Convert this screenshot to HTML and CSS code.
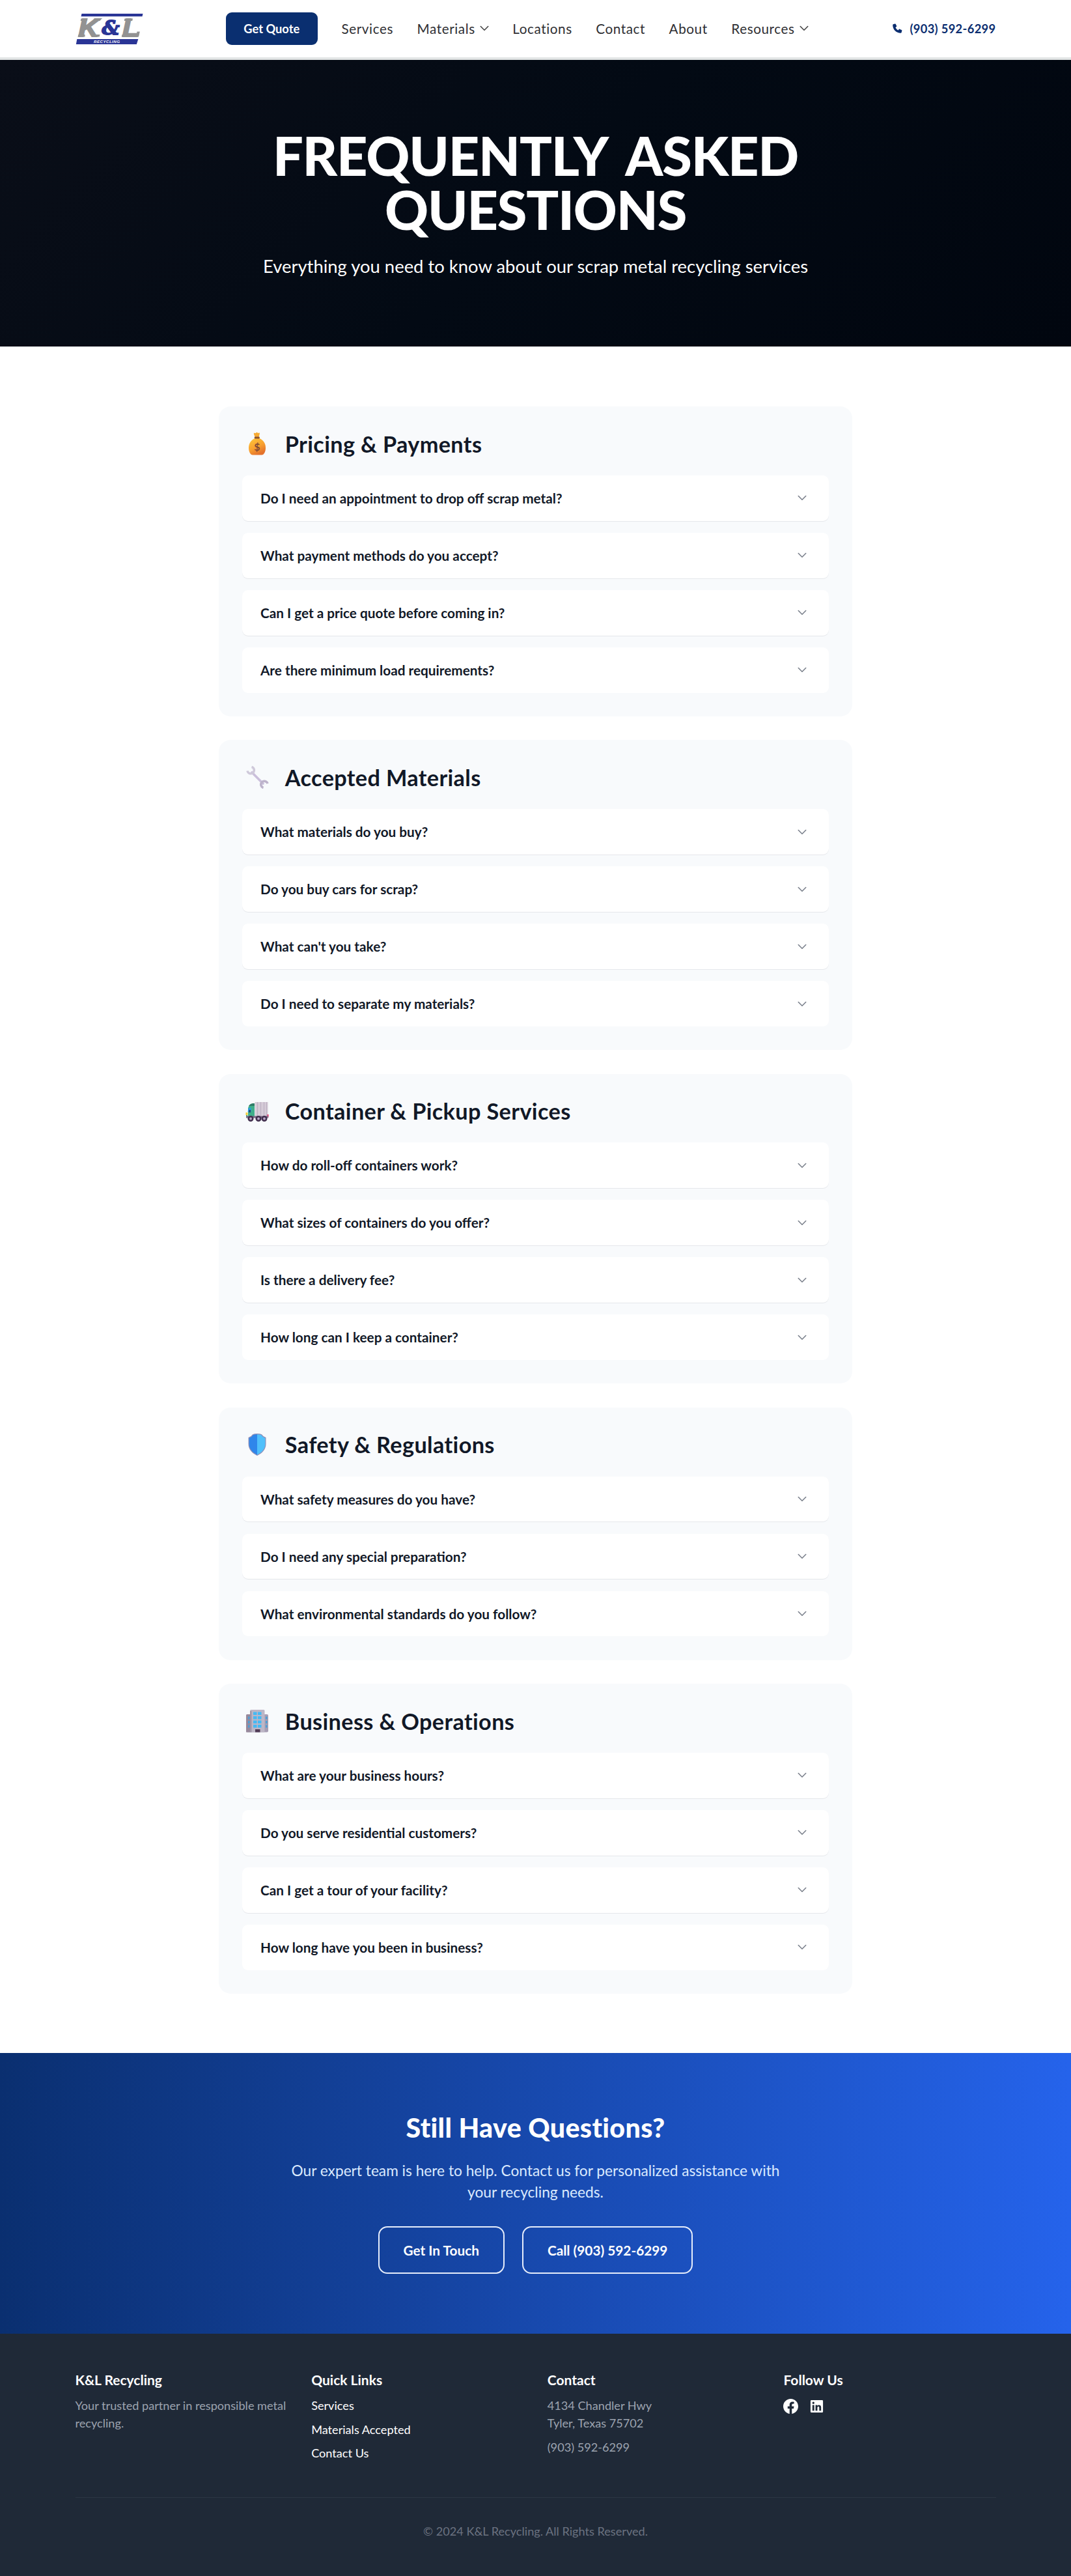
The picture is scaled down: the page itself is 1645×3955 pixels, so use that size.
FILE: index.html
```html
<!DOCTYPE html>
<html lang="en">
<head>
<meta charset="utf-8">
<title>Frequently Asked Questions | K&amp;L Recycling</title>
<link rel="stylesheet" href="styles.css">
</head>
<body>
<svg class="defs" width="0" height="0">
  <symbol id="chev" viewBox="0 0 14 9"><path d="M1.300 1.500 7 7.200l5.700-5.700" fill="none" stroke="currentColor" stroke-width="1.600" stroke-linecap="round" stroke-linejoin="round"/></symbol>
</svg>

<header class="header">
  <div class="container header-row">
    <svg class="logo" viewBox="0 0 104 48" width="104" height="48">
      <path d="M9.500 1h94l-1 4.300h-94z" fill="#2a3596"/>
      <path d="M2.300 40h94l-2.500 8h-93z" fill="#2a3596"/>
      <g font-weight="700" font-style="italic" fill="#929292" stroke="#929292" stroke-width="2" font-family="Liberation Sans">
        <text x="4.500" y="35.500" font-size="38" textLength="31" lengthAdjust="spacingAndGlyphs">K</text>
        <text x="72" y="35.500" font-size="38" textLength="26" lengthAdjust="spacingAndGlyphs">L</text>
      </g>
      <path d="M4.500 33h10v3.500h-11zM25 33h12.500l-.8 3.500H26zM8.500 8.500h10l-.8 3.500h-10zM28 8.500h12l-2.500 3.500h-10zM71.500 33h10v3.500H70.700zM75.500 8.500H88l-.8 3.500H74.700zM94.500 28.500h4.300L97 36.500h-4z" fill="#929292"/>
      <text x="40.500" y="32.500" font-family="DejaVu Serif" font-weight="700" font-style="italic" font-size="29" textLength="27" lengthAdjust="spacingAndGlyphs" fill="#2a3596" stroke="#2a3596" stroke-width="1.800">&amp;</text>
      <text x="28" y="46.200" font-family="Liberation Sans" font-weight="700" font-style="italic" font-size="6.200" textLength="40" fill="#fff">RECYCLING</text>
    </svg>
    <a class="quote">Get Quote</a>
    <nav class="nav">
      <a>Services</a>
      <a>Materials<svg class="nav-chev" width="14" height="9"><use href="#chev"/></svg></a>
      <a>Locations</a>
      <a>Contact</a>
      <a>About</a>
      <a>Resources<svg class="nav-chev" width="14" height="9"><use href="#chev"/></svg></a>
    </nav>
    <a class="phone">
      <svg width="15" height="15" viewBox="0 0 15 15"><path d="M3.600.6.900 1.300C.400 1.500.200 1.900.2 2.400c0 6.800 5.500 12.300 12.300 12.300.5 0 .9-.3 1.100-.8l.8-2.800c.1-.5-.1-1-.6-1.200l-3-1.200c-.4-.2-.8-.1-1.100.3l-1.200 1.500A9.700 9.700 0 0 1 4.400 6.300l1.500-1.200c.3-.3.400-.700.3-1.100L4.900 1.200C4.700.7 4.200.4 3.600.6z" fill="currentColor"/></svg>
      (903) 592-6299
    </a>
  </div>
</header>

<section class="hero">
  <h1>FREQUENTLY ASKED<br>QUESTIONS</h1>
  <p>Everything you need to know about our scrap metal recycling services</p>
</section>

<main class="faq">
  <section class="panel">
    <h2>
      <svg class="emoji" viewBox="0 0 36 36">
        <defs><linearGradient id="bag" x1="0" y1="0" x2=".5" y2="1"><stop offset="0" stop-color="#ffc83a"/><stop offset=".6" stop-color="#f8a130"/><stop offset="1" stop-color="#e4722c"/></linearGradient></defs>
        <path d="M14 1.500q1 1 2.200 0 1.300-1.400 2.500 0 1.200 1 2.300-.2 1.600.2.700 2.200L20.500 8.500h-5.800l-1.800-5q-.6-1.800 1.100-2z" fill="#f6ab34"/>
        <path d="M14.500 10h7C27.500 12.500 31 18 31 24.500c0 6-2.500 11-6 11H11c-3.500 0-6-5-6-11 0-6.500 3.500-12 9.500-14.500z" fill="url(#bag)"/>
        <rect x="13.800" y="7.500" width="8" height="3" rx="1" fill="#8a5231"/>
        <text x="18" y="29" text-anchor="middle" font-family="Lato" font-size="16" font-weight="700" fill="#7f4a35">$</text>
      </svg>
      Pricing &amp; Payments
    </h2>
    <div class="list">
      <div class="item">Do I need an appointment to drop off scrap metal?<svg class="chev"><use href="#chev"/></svg></div>
      <div class="item">What payment methods do you accept?<svg class="chev"><use href="#chev"/></svg></div>
      <div class="item">Can I get a price quote before coming in?<svg class="chev"><use href="#chev"/></svg></div>
      <div class="item">Are there minimum load requirements?<svg class="chev"><use href="#chev"/></svg></div>
    </div>
  </section>

  <section class="panel">
    <h2>
      <svg class="emoji" viewBox="0 0 36 36">
        <path d="M10 11 27 28" stroke="#cabfdb" stroke-width="3.800" stroke-linecap="round"/>
        <path d="M9.500 2.500A5.200 5.200 0 1 1 3 8.500" fill="none" stroke="#cfc9da" stroke-width="3.600"/>
        <path d="M27.500 34.500A5.200 5.200 0 1 1 34 28" fill="none" stroke="#bdb3cb" stroke-width="3.600"/>
      </svg>
      Accepted Materials
    </h2>
    <div class="list">
      <div class="item">What materials do you buy?<svg class="chev"><use href="#chev"/></svg></div>
      <div class="item">Do you buy cars for scrap?<svg class="chev"><use href="#chev"/></svg></div>
      <div class="item">What can't you take?<svg class="chev"><use href="#chev"/></svg></div>
      <div class="item">Do I need to separate my materials?<svg class="chev"><use href="#chev"/></svg></div>
    </div>
  </section>

  <section class="panel">
    <h2>
      <svg class="emoji" viewBox="0 0 36 36">
        <path d="M4 26V13.500Q5 8 9.500 8H14v19H1v-6z" fill="#3fae8a"/>
        <path d="M5 10q2-3.500 6-4h3v4z" fill="#2f7d68"/>
        <path d="M3.500 19l1.300-6h3.700v6z" fill="#2b9be0"/>
        <path d="M5.500 16h2.500v4H5z" fill="#234a78"/>
        <rect x="14.500" y="4" width="20" height="23.500" fill="#d6ccd8"/>
        <path d="M18.500 4v23M23.500 4v23M28.500 4v23M32.500 4v23" stroke="#bdb1c3" stroke-width="1.200"/>
        <path d="M.500 20h3v4h-3z" fill="#f6cf3e"/>
        <path d="M33.500 23h2v4.500h-2z" fill="#e0306a"/>
        <path d="M1 25.500h34v3H1z" fill="#7b6a85"/>
        <g fill="#43304f"><circle cx="8" cy="29.500" r="4.500"/><circle cx="20" cy="29.500" r="4.500"/><circle cx="29" cy="29.500" r="4.500"/></g>
        <g fill="#b9a6c6"><circle cx="8" cy="29.500" r="1.900"/><circle cx="20" cy="29.500" r="1.900"/><circle cx="29" cy="29.500" r="1.900"/></g>
      </svg>
      Container &amp; Pickup Services
    </h2>
    <div class="list">
      <div class="item">How do roll-off containers work?<svg class="chev"><use href="#chev"/></svg></div>
      <div class="item">What sizes of containers do you offer?<svg class="chev"><use href="#chev"/></svg></div>
      <div class="item">Is there a delivery fee?<svg class="chev"><use href="#chev"/></svg></div>
      <div class="item">How long can I keep a container?<svg class="chev"><use href="#chev"/></svg></div>
    </div>
  </section>

  <section class="panel">
    <h2>
      <svg class="emoji" viewBox="0 0 36 36">
        <path d="M18 1q4.500 0 7 1.200Q27 5.500 31.500 7v10C31.500 26 25 31.500 18 35 11 31.500 4.500 26 4.500 17V7Q9 5.500 11 2.200 13.500 1 18 1z" fill="#8f8fb8"/>
        <path d="M18 2.200q-4 0-6.300 1Q9.800 6.500 5.700 7.900V17c0 8.300 6 13.400 12.300 16.700z" fill="#2f86ea"/>
        <path d="M18 2.200q4 0 6.300 1 1.900 3.300 6 4.700V17c0 8.300-6 13.400-12.300 16.700z" fill="#50c0fb"/>
      </svg>
      Safety &amp; Regulations
    </h2>
    <div class="list">
      <div class="item">What safety measures do you have?<svg class="chev"><use href="#chev"/></svg></div>
      <div class="item">Do I need any special preparation?<svg class="chev"><use href="#chev"/></svg></div>
      <div class="item">What environmental standards do you follow?<svg class="chev"><use href="#chev"/></svg></div>
    </div>
  </section>

  <section class="panel">
    <h2>
      <svg class="emoji" viewBox="0 0 36 36">
        <rect x="1" y="8" width="34" height="27.500" rx="2" fill="#a79eb4"/>
        <path d="M1 35.500V10q0-2 2-2h4v27.500z" fill="#98899c"/>
        <rect x="7" y="1" width="22.500" height="34.500" rx="1.500" fill="#bdb6c6"/>
        <path d="M7 3h2.500v32.500H7z" fill="#a096a8"/>
        <g fill="#45b9f4">
          <path d="M12 4.500h5.500v4.500H12zM19 4.500h5.500v4.500H19zM12 11h5.500v4.500H12zM19 11h5.500v4.500H19zM12 17.500h5.500V22H12zM19 17.500h5.500V22H19zM12 24h5.500v4.500H12zM19 24h5.500v4.500H19z"/>
          <path d="M4 11.500h2.500v4H4zM4 18h2.500v4H4zM4 24.500h2.500v4H4zM31 11.500h2.500v4H31zM31 18h2.500v4H31zM31 24.500h2.500v4H31z" fill="#4a9fd6"/>
        </g>
        <path d="M15 31h7.500v4.500H15z" fill="#513c56"/>
      </svg>
      Business &amp; Operations
    </h2>
    <div class="list">
      <div class="item">What are your business hours?<svg class="chev"><use href="#chev"/></svg></div>
      <div class="item">Do you serve residential customers?<svg class="chev"><use href="#chev"/></svg></div>
      <div class="item">Can I get a tour of your facility?<svg class="chev"><use href="#chev"/></svg></div>
      <div class="item">How long have you been in business?<svg class="chev"><use href="#chev"/></svg></div>
    </div>
  </section>
</main>

<section class="cta">
  <h2>Still Have Questions?</h2>
  <p>Our expert team is here to help. Contact us for personalized assistance with your recycling needs.</p>
  <div class="cta-row">
    <a class="btn">Get In Touch</a>
    <a class="btn">Call (903) 592-6299</a>
  </div>
</section>

<footer class="footer">
  <div class="container">
    <div class="cols">
      <div class="col">
        <h3>K&amp;L Recycling</h3>
        <p>Your trusted partner in responsible metal recycling.</p>
      </div>
      <div class="col">
        <h3>Quick Links</h3>
        <a>Services</a>
        <a>Materials Accepted</a>
        <a>Contact Us</a>
      </div>
      <div class="col">
        <h3>Contact</h3>
        <p>4134 Chandler Hwy<br>Tyler, Texas 75702</p>
        <p>(903) 592-6299</p>
      </div>
      <div class="col">
        <h3>Follow Us</h3>
        <div class="social">
          <svg width="23" height="23" viewBox="0 0 24 24"><path fill="#fff" d="M24 12.070C24 5.410 18.630 0 12 0S0 5.410 0 12.070c0 6.030 4.390 11.020 10.130 11.930v-8.440H7.080v-3.490h3.050V9.410c0-3.020 1.790-4.690 4.530-4.690 1.310 0 2.690.24 2.690.24v2.970h-1.520c-1.490 0-1.960.93-1.960 1.890v2.260h3.330l-.53 3.490h-2.800V24C19.610 23.090 24 18.100 24 12.070z"/></svg>
          <svg width="23" height="23" viewBox="0 0 24 24"><path fill="#fff" d="M20.500 2h-17A1.500 1.500 0 0 0 2 3.500v17A1.500 1.500 0 0 0 3.500 22h17a1.500 1.500 0 0 0 1.500-1.500v-17A1.500 1.500 0 0 0 20.500 2zM8 19H5v-9h3zM6.500 8.250A1.750 1.750 0 1 1 8.300 6.500a1.780 1.780 0 0 1-1.800 1.750zM19 19h-3v-4.740c0-1.420-.6-1.930-1.380-1.930A1.740 1.740 0 0 0 13 14.190V19h-3v-9h2.900v1.300a3.110 3.110 0 0 1 2.700-1.400c1.550 0 3.360.86 3.360 3.660z"/></svg>
        </div>
      </div>
    </div>
    <p class="copy">© 2024 K&amp;L Recycling. All Rights Reserved.</p>
  </div>
</footer>
</body>
</html>
```
FILE: styles.css
```css
* { box-sizing: border-box; }
body { margin: 0; background: #fff; color: #111827; font-family: Lato, "Liberation Sans", sans-serif; }
h1, h2, h3, p { margin: 0; }
.defs { display: block; height: 0; }
.container { width: 1414px; margin: 0 auto; }

.header { height: 92px; border-bottom: 4.500px solid #e2e5e5; }
.header-row { height: 87.500px; display: flex; align-items: center; }
.logo { flex: none; }
.quote { margin-left: 127px; width: 141.500px; height: 50.500px; border-radius: 9px; background: #0a2f70; color: #fff; font-size: 18.280px; font-weight: 700; display: flex; align-items: center; justify-content: center; }
.nav { margin-left: 36.500px; display: flex; gap: 36.560px; font-size: 20.700px; letter-spacing: .580px; color: #2f2f33; }
.nav a { display: flex; align-items: center; }
.nav-chev { margin-left: 7px; color: #444; }
.phone { margin-left: auto; display: flex; align-items: center; gap: 11px; color: #0b2e70; font-size: 18.280px; font-weight: 700; letter-spacing: .350px; }

.hero { height: 440px; padding-top: 104.500px; text-align: center; color: #fff; background: linear-gradient(135deg, #0a0e18 0%, #030a14 50%, #01060f 100%); }
.hero h1 { font-size: 82.800px; line-height: 83px; font-weight: 900; letter-spacing: -1.200px; word-spacing: 14px; }
.hero p { margin-top: 26.500px; font-size: 27.450px; line-height: 40px; }

.faq { width: 973.500px; margin: 0 auto; padding: 92px 0 91.500px; display: flex; flex-direction: column; gap: 36.400px; }
.panel { background: #f8fafc; border-radius: 18.300px; padding: 36.560px 36.560px 36.300px; }
.panel h2 { display: flex; align-items: center; font-size: 34.270px; line-height: 41px; height: 41px; font-weight: 700; letter-spacing: .360px; margin-bottom: 28.400px; }
.emoji { width: 36px; height: 36px; margin: 0 24.500px 0 5px; flex: none; }
.list { display: flex; flex-direction: column; gap: 18.300px; }
.item { height: 69.700px; display: flex; align-items: center; justify-content: space-between; padding: 0 34px 0 27.700px; background: #fff; border-radius: 9px; font-size: 20.750px; font-weight: 700; box-shadow: 0 1px 0 #e5e7eb; }
.item:last-child { box-shadow: none; }
.chev { width: 14px; height: 9px; color: #7b818c; flex: none; }

.cta { height: 430.700px; padding-top: 90px; text-align: center; color: #fff; background: linear-gradient(90deg, #0a2f70, #2563eb); }
.cta h2 { font-size: 41.130px; line-height: 48px; font-weight: 900; letter-spacing: .380px; }
.cta p { width: 768px; margin: 26.500px auto 0; font-size: 22.700px; line-height: 32.600px; color: #dbeafe; }
.cta-row { margin-top: 35.500px; display: flex; justify-content: center; gap: 27.400px; }
.btn { height: 73.300px; padding: 0 36.800px; border: 2px solid #e6edfb; border-radius: 14px; font-size: 20.800px; font-weight: 700; display: flex; align-items: center; }

.footer { height: 371.500px; padding-top: 54.800px; background: #1f2937; }
.cols { display: grid; grid-template-columns: repeat(4, 1fr); gap: 36.560px; height: 197.500px; border-bottom: 1.500px solid #2b3544; }
.col { display: flex; flex-direction: column; gap: 9.100px; align-items: flex-start; font-size: 18.150px; line-height: 27.400px; color: #9ca3af; }
.col h3 { font-size: 21px; line-height: 32px; font-weight: 700; color: #fff; margin-bottom: 1px; }
.col a { color: #fff; }
.social { display: flex; gap: 17px; padding-top: 3px; }
.copy { margin-top: 38px; text-align: center; font-size: 18.150px; line-height: 27.400px; color: #6b7280; }
```
